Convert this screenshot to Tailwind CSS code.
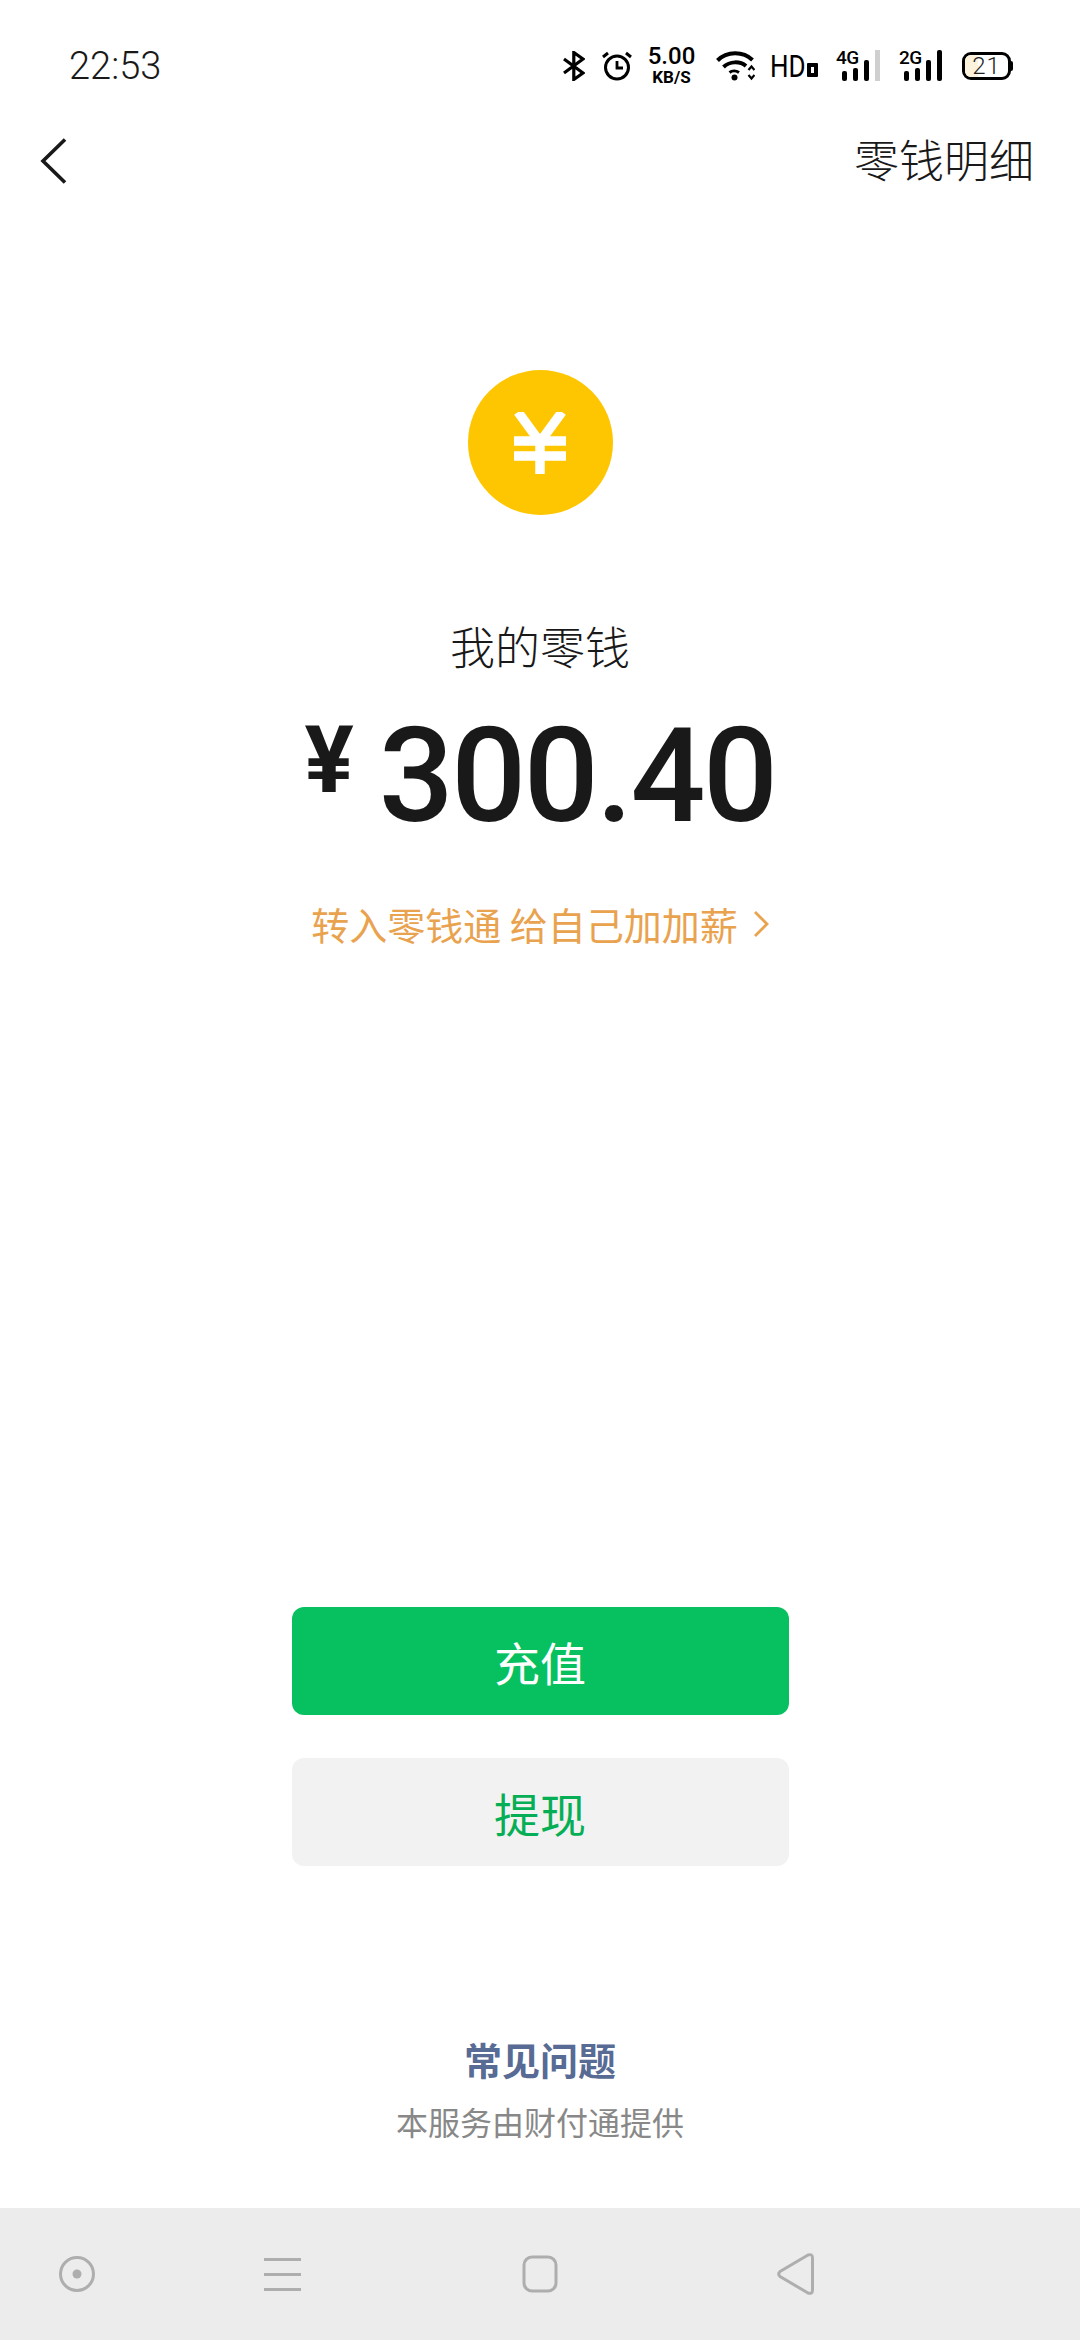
<!doctype html>
<html lang="zh-CN">
<head>
<meta charset="utf-8">
<script src="https://cdn.jsdelivr.net/npm/@tailwindcss/browser@4"></script>
</head>
<body class="bg-white">
<div class="flex flex-col w-[1080px] h-[2340px] bg-white text-[#191919] font-['Noto_Sans_CJK_SC',sans-serif] overflow-hidden">
  <!-- status bar -->
  <div class="flex items-center justify-between h-[132px] pl-[69px] pr-[67px] shrink-0">
    <span class="font-['Roboto',sans-serif] font-light text-[38px] leading-none text-[#191919]">22:53</span>
    <div class="flex items-center h-[40px]">
      <svg class="w-[22px] h-[30px]" viewBox="0 0 22 30" fill="none" stroke="#000" stroke-width="3.200"><path d="M1 8 L20 22 L10.800 28.500 V1.500 L20 8 L1 22"/></svg>
      <svg class="w-[30px] h-[30px] ml-[17px]" viewBox="0 0 30 30" fill="none" stroke="#000" stroke-width="3"><circle cx="15" cy="16.500" r="11.500"/><path d="M15 10 V17 H21" stroke-width="2.800"/><path d="M1 6 L6 2 M29 6 L24 2"/></svg>
      <div class="flex flex-col items-center w-[47px] ml-[16px] font-['Roboto',sans-serif] font-medium text-black">
        <span class="text-[24px] leading-[21px] mt-[-3px]">5.00</span>
        <span class="text-[17px] leading-[14px] font-bold mt-[3px]">KB/S</span>
      </div>
      <svg class="w-[39px] h-[30px] ml-[21px]" viewBox="0 0 39 30" fill="none" stroke="#000" stroke-width="4"><path d="M1.500 9.500 C11 0 27 0 36.500 9"/><path d="M7.500 16 C14 10 24 10 30 15"/><path d="M13.500 21.500 C16 19.500 20 19.500 23 21.500" stroke-width="3"/><circle cx="18.500" cy="26.500" r="3" fill="#000" stroke="none"/><path d="M32.500 19 L35.500 15.500 L38.500 19 M32.500 24 L35.500 27.500 L38.500 24" stroke-width="2.200"/></svg>
      <div class="flex items-end ml-[15px] w-[48px] h-[24px] text-black">
        <span class="block w-[36px] font-['Roboto',sans-serif] font-normal text-[31px] leading-[23px] origin-left scale-x-[0.84] whitespace-nowrap">HD</span>
        <span class="w-[11px] h-[14px] ml-[1px] mb-[1px] border-[4px] border-black bg-white rounded-[1px]"></span>
      </div>
      <div class="relative w-[44px] h-[32px] ml-[18px]">
        <span class="absolute left-0 top-[-1px] font-['Roboto',sans-serif] font-medium text-[19px] leading-[17px] tracking-[-0.5px] text-black">4G</span>
        <svg class="w-[44px] h-[32px]" viewBox="0 0 44 32" fill="#000"><rect x="6" y="21" width="5" height="10" rx="2"/><rect x="17" y="18" width="5" height="13" rx="2"/><rect x="28" y="10" width="5" height="21" rx="2"/><rect x="39" y="0" width="5" height="31" fill="#cfcfcf"/></svg>
      </div>
      <div class="relative w-[43px] h-[32px] ml-[19px]">
        <span class="absolute left-0 top-[-1px] font-['Roboto',sans-serif] font-medium text-[19px] leading-[17px] tracking-[-0.5px] text-black">2G</span>
        <svg class="w-[43px] h-[32px]" viewBox="0 0 43 32" fill="#000"><rect x="5" y="21" width="5" height="10" rx="2"/><rect x="16" y="18" width="5" height="13" rx="2"/><rect x="27" y="10" width="5" height="21" rx="2"/><rect x="38" y="0" width="5" height="31" rx="2"/></svg>
      </div>
      <div class="flex items-center ml-[20px]">
        <div class="relative flex items-center justify-center w-[49px] h-[28px] border-[3.500px] border-black rounded-[9px] overflow-hidden bg-white">
          <div class="absolute left-0 top-0 bottom-0 w-[13px] bg-[#fdf3dc]"></div>
          <span class="relative font-['Roboto',sans-serif] font-light text-[24px] leading-none tracking-[1px] text-[#222]">21</span>
        </div>
        <div class="w-[2px] h-[10px] bg-black rounded-r-[2px]"></div>
      </div>
    </div>
  </div>
  <!-- header -->
  <div class="flex items-center justify-between h-[58px] pl-[40px] pr-[46px] shrink-0">
    <svg class="w-[27px] h-[46px]" viewBox="0 0 27 46" fill="none" stroke="#191919" stroke-width="3.600"><path d="M25 1.500 L3 23 L25 44.500"/></svg>
    <span class="text-[45px] leading-[58px] font-light text-[#191919] translate-y-[-2px]">零钱明细</span>
  </div>
  <!-- main -->
  <div class="flex flex-col items-center flex-1">
    <div class="flex items-center justify-center w-[145px] h-[145px] rounded-full bg-[#fec600] mt-[180px]">
      <svg class="w-[52px] h-[62px]" viewBox="0 0 52 62" fill="none" stroke="#fff" stroke-width="9.500"><path d="M4 0 L26 30 L48 0"/><path d="M26 28 V62"/><path d="M0 29 H52 M0 44 H52"/></svg>
    </div>
    <div class="text-[45px] leading-[60px] font-light mt-[101px] text-[#191919]">我的零钱</div>
    <div class="flex items-start h-[130px] mt-[35px] text-[#191919]">
      <span class="font-['Roboto',sans-serif] font-bold text-[92px] leading-[100px] mr-[25px]">¥</span>
      <span class="font-['Roboto',sans-serif] font-medium text-[132px] leading-[130px] tracking-[-2.500px]">300.40</span>
    </div>
    <div class="flex items-center h-[50px] mt-[58px] text-[#e9a24e]">
      <span class="text-[38px] leading-[50px]">转入零钱通 给自己加加薪</span>
      <svg class="w-[16px] h-[28px] ml-[15px]" viewBox="0 0 16 28" fill="none" stroke="#e9a24e" stroke-width="2.800"><path d="M2 2 L14 14 L2 26"/></svg>
    </div>
    <button class="flex items-center justify-center w-[497px] h-[108px] rounded-[12px] bg-[#07c160] text-white text-[46px] mt-[658px]">充值</button>
    <button class="flex items-center justify-center w-[497px] h-[108px] rounded-[12px] bg-[#f2f2f2] text-[#06ae56] text-[46px] mt-[43px]">提现</button>
    <div class="text-[38px] leading-[50px] font-bold text-[#576b95] mt-[168px]">常见问题</div>
    <div class="text-[32px] leading-[44px] text-[#888888] mt-[15px]">本服务由财付通提供</div>
  </div>
  <!-- nav -->
  <div class="relative h-[132px] shrink-0 bg-[#ececec]">
    <svg class="absolute left-[58px] top-[47px] w-[38px] h-[38px]" viewBox="0 0 38 38" fill="none" stroke="#aeaeae" stroke-width="3"><circle cx="19" cy="19" r="16.500"/><circle cx="19" cy="19" r="4.500" fill="#aeaeae" stroke="none"/></svg>
    <svg class="absolute left-[264px] top-[49px] w-[37px] h-[34px]" viewBox="0 0 37 34" fill="#aeaeae"><rect y="1" width="37" height="3"/><rect y="16" width="37" height="3"/><rect y="31" width="37" height="3"/></svg>
    <svg class="absolute left-[522px] top-[47px] w-[36px] h-[38px]" viewBox="0 0 36 38" fill="none" stroke="#aeaeae" stroke-width="3"><rect x="2" y="2" width="32" height="34" rx="8"/></svg>
    <svg class="absolute left-[777px] top-[45px] w-[38px] h-[42px]" viewBox="0 0 38 42" fill="none" stroke="#aeaeae" stroke-width="3" stroke-linejoin="round"><path d="M3 18.500 L31 2 Q35.500 0.500 35.500 5 V37 Q35.500 41.500 31 40 L3 23.500 Q0.500 21 3 18.500 Z"/></svg>
  </div>
</div>
</body>
</html>
